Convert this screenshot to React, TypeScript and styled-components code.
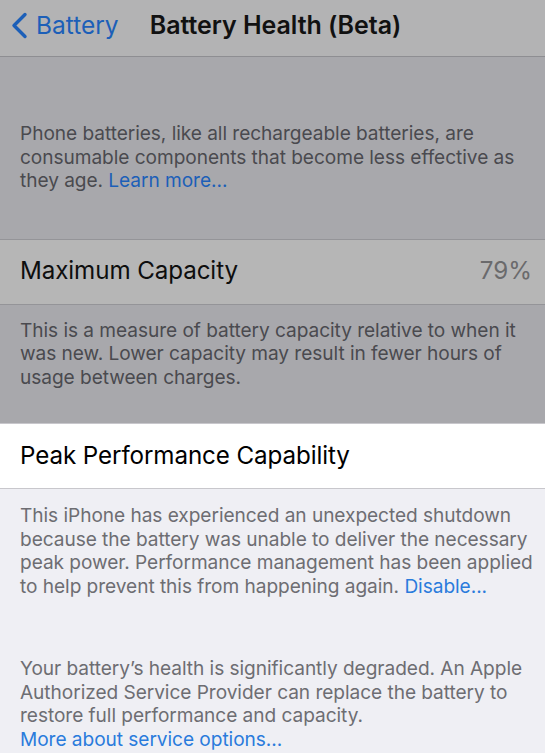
import React from "react";
import styled, { createGlobalStyle } from "styled-components";

const Global = createGlobalStyle`
  html, body {
    margin: 0;
    padding: 0;
    background: #efeff4;
  }
  body {
    font-family: Inter, "Noto Sans", "Liberation Sans", sans-serif;
    -webkit-font-smoothing: antialiased;
  }
`;

const Screen = styled.div`
  width: 545px;
  min-height: 753px;
  display: flex;
  flex-direction: column;
  overflow: hidden;
`;

/* The upper part of the page sits under a dimming layer */
const Dimmed = styled.div`
  display: flex;
  flex-direction: column;
  background: #a8a8ac;
`;

const NavBar = styled.header`
  display: grid;
  grid-template-columns: 1fr auto 1fr;
  align-items: center;
  background: #b3b3b4;
  border-bottom: 1px solid #8e8e92;
  box-sizing: border-box;
  height: 57px;
  padding: 0 0 6px 6px;
`;

const BackLink = styled.a`
  display: flex;
  align-items: center;
  gap: 8px;
  padding-left: 4px;
  color: #1c5fb8;
  font-size: 24.5px;
  text-decoration: none;
`;

const Title = styled.h1`
  margin: 0;
  font-size: 25px;
  font-weight: 600;
  color: #111;
  letter-spacing: -0.05px;
`;

const Footer = styled.p<{ $top: number; $bottom: number; $dim?: boolean }>`
  margin: 0;
  padding: ${(p) => p.$top}px 4px ${(p) => p.$bottom}px 20px;
  font-size: 19.1px;
  line-height: 23.5px;
  letter-spacing: -0.05px;
  white-space: nowrap;
  color: ${(p) => (p.$dim ? "#4a4a4f" : "#6d6d72")};
`;

const Link = styled.span<{ $dim?: boolean }>`
  color: ${(p) => (p.$dim ? "#1c5fb8" : "#2a7bdc")};
`;

const Cell = styled.div<{ $dim?: boolean }>`
  height: 64px;
  display: flex;
  align-items: center;
  justify-content: space-between;
  padding: 0 13px 0 20px;
  background: ${(p) => (p.$dim ? "#b6b6b6" : "#ffffff")};
  border-top: 1px solid ${(p) => (p.$dim ? "#949498" : "#c8c7cc")};
  border-bottom: 1px solid ${(p) => (p.$dim ? "#949498" : "#c8c7cc")};
`;

const CellLabel = styled.span<{ $dim?: boolean }>`
  font-size: 24.2px;
  letter-spacing: -0.1px;
  color: ${(p) => (p.$dim ? "#0e0e0e" : "#000")};
  margin-top: -2px;
`;

const CellValue = styled.span`
  font-size: 24.2px;
  color: #6a6a6c;
  margin-top: -2px;
`;

const Chevron = () => (
  <svg width="18" height="27" viewBox="0 0 18 27" fill="none">
    <path
      d="M15 2.5 L4 13.5 L15 24.5"
      stroke="#1c5fb8"
      strokeWidth="3.4"
      strokeLinecap="round"
      strokeLinejoin="round"
    />
  </svg>
);

const Gap = styled.div<{ $h: number }>`
  height: ${(p) => p.$h}px;
`;

export default function App() {
  return (
    <Screen>
      <Global />
      <Dimmed>
        <NavBar>
          <BackLink>
            <Chevron />
            Battery
          </BackLink>
          <Title>Battery Health (Beta)</Title>
          <span />
        </NavBar>
        <Footer $dim $top={65} $bottom={46}>
          Phone batteries, like all rechargeable batteries, are
          <br />
          consumable components that become less effective as
          <br />
          they age. <Link $dim>Learn more...</Link>
        </Footer>
        <Cell $dim>
          <CellLabel $dim>Maximum Capacity</CellLabel>
          <CellValue>79%</CellValue>
        </Cell>
        <Footer $dim $top={14} $bottom={34}>
          This is a measure of battery capacity relative to when it
          <br />
          was new. Lower capacity may result in fewer hours of
          <br />
          usage between charges.
        </Footer>
      </Dimmed>
      <Cell>
        <CellLabel>Peak Performance Capability</CellLabel>
      </Cell>
      <Footer $top={15} $bottom={0}>
        This iPhone has experienced an unexpected shutdown
        <br />
        because the battery was unable to deliver the necessary
        <br />
        peak power. Performance management has been applied
        <br />
        to help prevent this from happening again.{" "}
        <Link>Disable...</Link>
      </Footer>
      <Gap $h={59} />
      <Footer $top={0} $bottom={0}>
        Your battery’s health is significantly degraded. An Apple
        <br />
        Authorized Service Provider can replace the battery to
        <br />
        restore full performance and capacity.
        <br />
        <Link>More about service options...</Link>
      </Footer>
    </Screen>
  );
}
